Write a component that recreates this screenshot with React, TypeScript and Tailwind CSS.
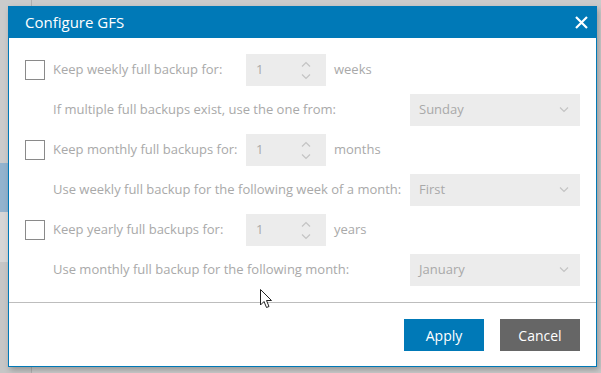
import React from "react";

const font = { fontFamily: '"Open Sans", "Noto Sans", sans-serif' };

function Chevron({ up }: { up?: boolean }) {
  return (
    <svg width="10" height="6" viewBox="0 0 10 6" className="block">
      <path
        d={up ? "M1 5.5 L5 1.5 L9 5.5" : "M1 0.5 L5 4.5 L9 0.5"}
        fill="none"
        stroke="#c4c4c4"
        strokeWidth="1.2"
      />
    </svg>
  );
}

function Spinner() {
  return (
    <div className="flex h-8 w-20 items-center justify-between bg-[#ececec] pl-[10px] pr-[15px]">
      <span>1</span>
      <div className="flex flex-col gap-[7px]">
        <Chevron up />
        <Chevron />
      </div>
    </div>
  );
}

function Select({ value }: { value: string }) {
  return (
    <div className="flex h-8 w-[170px] items-center justify-between bg-[#ececec] pl-[9px] pr-[11px]">
      <span>{value}</span>
      <Chevron />
    </div>
  );
}

function CheckRow({ label, unit }: { label: string; unit: string }) {
  return (
    <div className="flex h-8 items-center">
      <div className="h-5 w-5 border border-[#8a8a8a] bg-white" />
      <span className="ml-2 w-[193px]">{label}</span>
      <Spinner />
      <span className="ml-2">{unit}</span>
    </div>
  );
}

function SubRow({ label, value }: { label: string; value: string }) {
  return (
    <div className="flex h-8 items-center pl-7">
      <span className="flex-1">{label}</span>
      <Select value={value} />
    </div>
  );
}

export default function App() {
  return (
    <div className="relative h-[373px] w-[601px] overflow-hidden bg-[#cbcbcb]" style={font}>
      {/* page behind the modal */}
      <div className="flex h-full w-8 flex-col border-r border-[#b0b0b0]">
        <div className="h-[163px]" />
        <div className="h-[49px] bg-[#92b3ce]" />
        <div className="h-[50px] bg-[#d6d6d6]" />
        <div className="flex-1 bg-[#c6c6c6]" />
      </div>

      {/* modal */}
      <div className="absolute left-2 top-[6px] flex h-[361px] w-[589px] flex-col border border-t-0 border-[#0079b7] bg-white shadow-[2px_3px_6px_rgba(0,0,0,0.25)]">
        <div className="-mx-px flex h-8 items-center justify-between bg-[#0079b7] pl-[17px] pr-[9px] text-white">
          <span className="pt-px text-[15px]">Configure GFS</span>
          <svg width="13" height="13" viewBox="0 0 13 13">
            <path d="M1 1 L12 12 M12 1 L1 12" stroke="#fff" strokeWidth="2.2" />
          </svg>
        </div>

        <div className="flex flex-col gap-2 px-4 pt-4 pb-4 text-[13px] text-[#a9a9a9]">
          <CheckRow label="Keep weekly full backup for:" unit="weeks" />
          <SubRow label="If multiple full backups exist, use the one from:" value="Sunday" />
          <CheckRow label="Keep monthly full backups for:" unit="months" />
          <SubRow label="Use weekly full backup for the following week of a month:" value="First" />
          <CheckRow label="Keep yearly full backups for:" unit="years" />
          <SubRow label="Use monthly full backup for the following month:" value="January" />
        </div>

        <div className="h-px bg-[#bdbdbd]" />

        <div className="flex justify-end gap-4 px-4 pt-4 text-[14px] text-white">
          <button className="h-8 w-20 bg-[#0079b7]">Apply</button>
          <button className="h-8 w-20 bg-[#666666]">Cancel</button>
        </div>
      </div>

      {/* mouse cursor */}
      <svg className="absolute left-[260px] top-[289px]" width="13" height="20" viewBox="0 0 13 20">
        <path
          d="M0.5 0.5 L0.5 16 L4 12.5 L6.5 18.5 L9 17.5 L6.5 11.5 L11.5 11.5 Z"
          fill="#fff"
          stroke="#222"
          strokeWidth="1"
        />
      </svg>
    </div>
  );
}
